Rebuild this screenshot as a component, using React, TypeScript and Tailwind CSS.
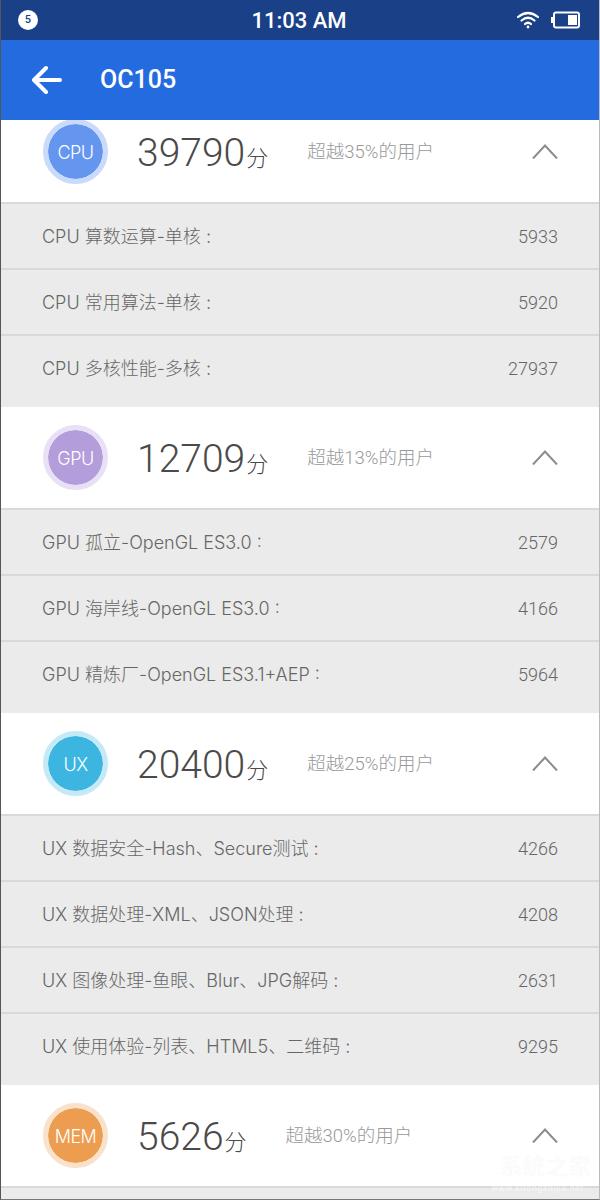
import React from "react";

type Row = [string, string];
type Section = {
  tag: string;
  score: string;
  pct: string;
  fill: string;
  ring: string;
  rows: Row[];
};

const sections: Section[] = [
  {
    tag: "CPU", score: "39790", pct: "超越35%的用户", fill: "bg-[#6496f0]", ring: "border-[#c9dafa]",
    rows: [["CPU 算数运算-单核 :", "5933"], ["CPU 常用算法-单核 :", "5920"], ["CPU 多核性能-多核 :", "27937"]],
  },
  {
    tag: "GPU", score: "12709", pct: "超越13%的用户", fill: "bg-[#b39ddb]", ring: "border-[#e8e0f5]",
    rows: [["GPU 孤立-OpenGL ES3.0 :", "2579"], ["GPU 海岸线-OpenGL ES3.0 :", "4166"], ["GPU 精炼厂-OpenGL ES3.1+AEP :", "5964"]],
  },
  {
    tag: "UX", score: "20400", pct: "超越25%的用户", fill: "bg-[#3cb6e0]", ring: "border-[#c5e9f6]",
    rows: [["UX 数据安全-Hash、Secure测试 :", "4266"], ["UX 数据处理-XML、JSON处理 :", "4208"], ["UX 图像处理-鱼眼、Blur、JPG解码 :", "2631"], ["UX 使用体验-列表、HTML5、二维码 :", "9295"]],
  },
  {
    tag: "MEM", score: "5626", pct: "超越30%的用户", fill: "bg-[#ec9d50]", ring: "border-[#f9e2cc]",
    rows: [],
  },
];

function Head({ s }: { s: Section }) {
  return (
    <div className="flex h-[103px] items-center bg-white border-b-2 border-[#d9d9d9] pl-[42px] pr-[41px]">
      <div className={`flex h-[65px] w-[65px] shrink-0 items-center justify-center rounded-full border-[5px] pt-[2px] ${s.ring} ${s.fill} bg-clip-padding`}>
        <span className="font-['Inter','Noto_Sans_CJK_SC',sans-serif] text-[18px] font-light text-white tracking-[-0.5px]">{s.tag}</span>
      </div>
      <div className="ml-[29px] flex items-baseline pt-[5px] text-[#4a4a4a]">
        <span className="text-[39px] font-light leading-none">{s.score}</span>
        <span className="ml-[1px] text-[22px] font-light">分</span>
      </div>
      <span className="ml-[39px] pt-[2px] text-[18.5px] font-light text-[#999999]">{s.pct}</span>
      <svg className="ml-auto" width="26" height="15" viewBox="0 0 26 15" fill="none">
        <path d="M1 14.5 L13 1.5 L25 14.5" stroke="#8c8c8c" strokeWidth="2" />
      </svg>
    </div>
  );
}

function RowItem({ r, last }: { r: Row; last: boolean }) {
  return (
    <div className={`flex items-center justify-between bg-[#ebebeb] pl-[41px] pr-[41px] text-[18px] font-light text-[#666666] ${last ? "h-[71px] pb-[6px]" : "h-[66px] border-b-2 border-[#d9d9d9]"}`}>
      <span className="font-['Inter','Noto_Sans_CJK_SC',sans-serif]">{r[0]}</span>
      <span>{r[1]}</span>
    </div>
  );
}

export default function App() {
  return (
    <div
      className="relative flex h-[1200px] w-[600px] flex-col overflow-hidden border-x border-b border-l-[#555555] border-r-[#bbbbbb] border-b-[#777777] bg-[#ebebeb]"
      style={{ fontFamily: '"Roboto", "Noto Sans CJK SC", sans-serif' }}
    >
      <div className="grid h-[40px] shrink-0 grid-cols-3 items-center bg-[#1a4087] pl-[17px] pr-[19px] text-white">
        <div className="flex h-[20px] w-[20px] items-center justify-center rounded-full bg-white text-[11px] font-medium text-[#1a4087]">5</div>
        <span className="whitespace-nowrap text-center text-[22px] font-medium">11:03 AM</span>
        <div className="flex items-center justify-end gap-[12px]">
          <svg width="22" height="18" viewBox="0 0 22 18" fill="none" stroke="white" strokeWidth="2.2" strokeLinecap="round">
            <path d="M1 6 Q11 -2 21 6" />
            <path d="M4.5 9.5 Q11 4 17.5 9.5" />
            <path d="M8 13 Q11 10.5 14 13" />
            <circle cx="11" cy="16" r="1.4" fill="white" stroke="none" />
          </svg>
          <svg width="29" height="18" viewBox="0 0 29 18" fill="none">
            <rect x="0" y="6" width="3" height="6" fill="white" />
            <rect x="3" y="1.5" width="25" height="15" rx="2" stroke="white" strokeWidth="2" />
            <rect x="17" y="4" width="9" height="10" fill="white" />
          </svg>
        </div>
      </div>

      <div className="flex h-[80px] shrink-0 items-center bg-[#256be0] pl-[31px] text-white">
        <svg width="30" height="30" viewBox="0 0 30 30" fill="none" stroke="white" strokeWidth="4" strokeLinecap="round" strokeLinejoin="round">
          <path d="M28 15 H3 M14 3 L2 15 L14 27" />
        </svg>
        <span className="ml-[38px] text-[25px] font-medium">OC105</span>
      </div>

      <div className="min-h-0 flex-1 overflow-hidden">
        <div className="-mt-[19px]">
          {sections.map((s) => (
            <div key={s.tag}>
              <Head s={s} />
              {s.rows.map((r, i) => (
                <RowItem key={i} r={r} last={i === s.rows.length - 1} />
              ))}
            </div>
          ))}
        </div>
      </div>

      <div className="absolute top-[1153px] left-[499px] text-[22px] font-bold leading-[28px] tracking-[1px] text-[#fbfbfb]">系统之家</div>
      <div className="absolute top-[1182px] left-[490px] text-[9px] leading-[12px] tracking-[0.5px] text-white/60">www.xitongzhijia.net</div>
    </div>
  );
}
